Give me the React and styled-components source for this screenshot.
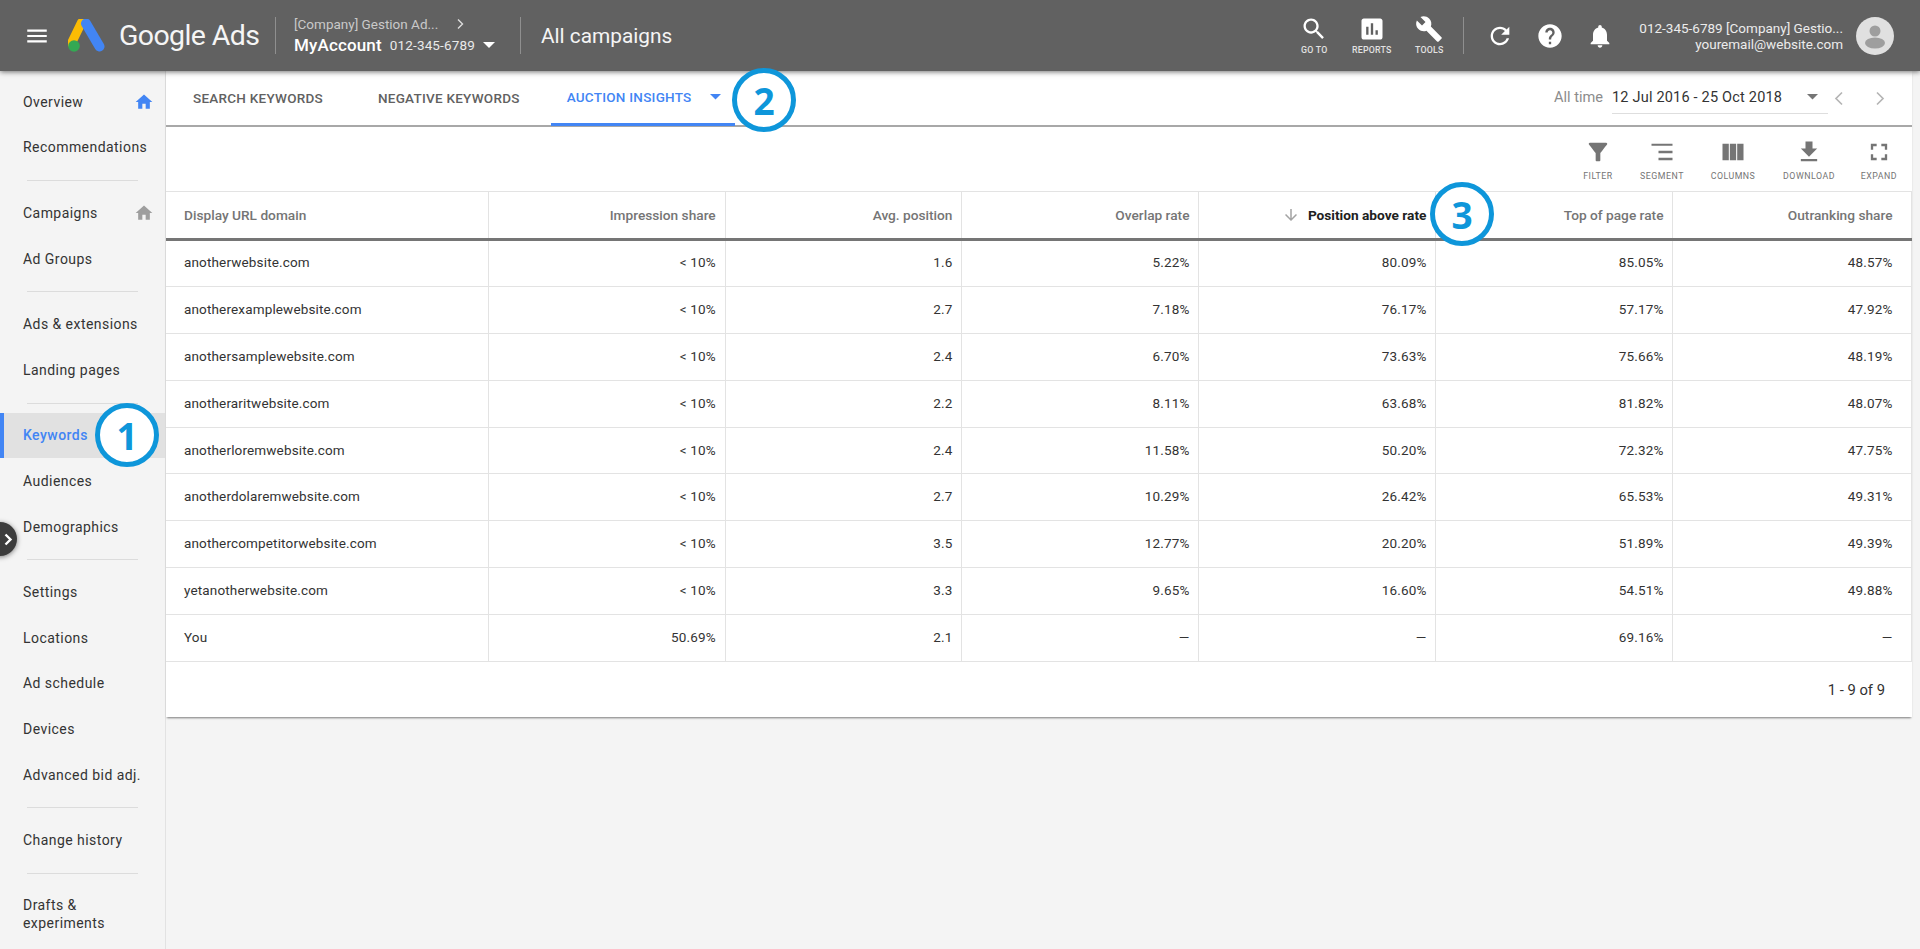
import React from "react";
import styled, { createGlobalStyle } from "styled-components";

const Global = createGlobalStyle`
  html, body { margin: 0; padding: 0; height: 949px; overflow: hidden; background: #f4f4f4; }
  body { font-family: Roboto, "Liberation Sans", sans-serif; color: #333; }
  * { box-sizing: border-box; }
`;

const Page = styled.div`
  position: relative;
  width: 1920px;
  height: 949px;
  display: flex;
  flex-direction: column;
  overflow: hidden;
`;

const Header = styled.header`
  position: relative;
  z-index: 3;
  height: 71px;
  flex: none;
  background: #616161;
  box-shadow: 0 1px 5px rgba(0,0,0,.55);
  display: flex;
  align-items: center;
  color: #fff;
  padding-left: 24px;
`;
const Burger = styled.svg`
  width: 26px; height: 26px; fill: #fff; flex: none; margin-right: 18px;
`;
const LogoMark = styled.svg`
  width: 37px; height: 33px; flex: none; margin-right: 14px;
`;
const LogoText = styled.div`
  font-size: 28.5px; font-weight: 400; letter-spacing: -.6px; width: 156px; flex: none; color: #f5f5f5;
`;
const VSep = styled.div`
  width: 1px; height: 37px; background: #8f8f8f; flex: none;
  margin: ${p => p.$m || "0"};
`;
const Account = styled.div`
  margin-left: 18px; width: 226px; flex: none;
  display: flex; flex-direction: column; gap: 3px;
`;
const Crumb = styled.div`
  display: flex; align-items: center; font-size: 13.5px; line-height: 16px; color: #c9c9c9;
  span { width: 161px; white-space: nowrap; }
  svg { width: 10px; height: 12px; stroke: #ddd; fill: none; stroke-width: 1.4; }
`;
const AccountLine = styled.div`
  display: flex; align-items: center; line-height: 20px;
  b { font-size: 17px; font-weight: 500; letter-spacing: .15px; margin-right: 8px; }
  span { font-size: 13.5px; color: #eaeaea; letter-spacing: .15px; margin-right: 8px; }
`;
const Caret = styled.svg`
  width: ${p => p.$w || 12}px; height: ${p => (p.$w || 12) / 2}px; fill: ${p => p.$c || "#fff"}; flex: none;
`;
const PageTitle = styled.div`
  margin-left: 20px; font-size: 20.8px; font-weight: 400; color: #f5f5f5; flex: 1;
`;
const HeadTools = styled.div`
  display: flex; align-items: center; height: 100%;
`;
const HeadTool = styled.div`
  width: 57.5px; display: flex; flex-direction: column; align-items: center; gap: 1px;
  svg { width: 28px; height: 28px; fill: #fff; }
  span { font-size: 8.8px; font-weight: 500; letter-spacing: .2px; color: #e2e2e2; line-height: 12px; }
`;
const HeadIcon = styled.svg`
  width: 28px; height: 28px; fill: #fff; flex: none; margin-left: ${p => p.$ml}px;
`;
const User = styled.div`
  margin-left: 15px; text-align: right; font-size: 13.5px; line-height: 16px; color: #ececec; width: 214px;
  white-space: nowrap;
`;
const Avatar = styled.svg`
  width: 38px; height: 38px; flex: none; margin: 0 26px 0 13px;
`;

const Body = styled.div`
  flex: 1; display: flex; min-height: 0;
`;
const Side = styled.nav`
  width: 166px; flex: none; background: #f4f4f4; border-right: 1px solid #e2e2e2; padding-top: 8px;
`;
const NavItem = styled.div`
  position: relative;
  min-height: 45.6px;
  display: flex; align-items: center; justify-content: space-between;
  padding: 13px 11px 13px 23px;
  font-size: 14px; letter-spacing: .45px; line-height: 18px;
  color: ${p => p.$active ? "#4285f4" : "#333"};
  font-weight: ${p => p.$active ? 500 : 400};
  background: ${p => p.$active ? "#e1e1e1" : "transparent"};
  border-left: ${p => p.$active ? "4px solid #4285f4" : "0"};
  padding-left: ${p => p.$active ? 19 : 23}px;
  svg { width: 20px; height: 20px; margin: -1px 0; fill: ${p => p.$pin}; flex: none; }
`;
const NavDiv = styled.div`
  height: 1px; background: #dcdcdc; margin: 10px 27px 9px 27px;
`;
const Expander = styled.div`
  position: absolute; left: -17px; top: 522px; width: 34px; height: 34px; border-radius: 50%;
  background: #3c3c3c; box-shadow: 0 1px 5px rgba(0,0,0,.5);
  display: flex; align-items: center; justify-content: flex-end; padding-right: 4px; z-index: 2;
  svg { width: 10px; height: 13px; stroke: #fff; stroke-width: 2.4; fill: none; }
`;

const Main = styled.main`
  width: 1746px; flex: none;
`;
const Card = styled.section`
  background: #fff;
  box-shadow: 0 2px 2px -1px rgba(0,0,0,.5);
`;
const TabBar = styled.div`
  height: 56px; display: flex; background: #fff;
  border-bottom: 2px solid #a8a8a8;
  padding-left: 27px; align-items: stretch;
`;
const Tab = styled.div`
  position: relative;
  display: flex; align-items: center;
  font-size: 13.5px; font-weight: 500; letter-spacing: .25px;
  height: 55px;
  padding-bottom: 2px;
  color: ${p => p.$active ? "#4285f4" : "#616161"};
  margin-right: ${p => p.$mr}px;
  ${p => p.$active && `
    padding-left: 16px; padding-right: 13px; margin-left: -16px; padding-bottom: 0; border-bottom: 3px solid #4285f4; gap: 18px; width: 184px;
  `}
`;
const DateBox = styled.div`
  margin-left: auto; display: flex; align-items: center; height: 100%;
`;
const DateLabel = styled.span`
  font-size: 14.6px; color: #8c8c8c; margin-right: 9px; padding-bottom: 2px;
`;
const DateField = styled.div`
  width: 216px; height: 100%; display: flex; align-items: center; justify-content: space-between;
  font-size: 14.5px; color: #333; letter-spacing: .2px; padding: 0 10px 2px 0; position: relative;
  &::after { content: ""; position: absolute; left: 0; right: 0; bottom: 11px; height: 1px; background: #dedede; }
`;
const Chevrons = styled.div`
  display: flex; gap: 31px; margin: 0 27px 0 6px;
  svg { width: 10px; height: 15px; fill: none; stroke: #b5b5b5; stroke-width: 1.7; }
`;
const Toolbar = styled.div`
  height: 64px; display: flex; justify-content: flex-end; padding: 11px 0 0 0; align-items: flex-start;
`;
const ToolBtn = styled.div`
  width: ${p => p.$w}px; display: flex; flex-direction: column; align-items: center; gap: 4px;
  svg { width: 28px; height: 28px; fill: #757575; }
  span { font-size: 8.8px; font-weight: 400; letter-spacing: .5px; color: #757575; line-height: 12px; }
`;
const Table = styled.table`
  width: 1746px; border-collapse: collapse; table-layout: fixed; font-size: 13.5px;
  border-top: 1px solid #e3e3e3;
`;
const pad = p => (p.$first ? "0 0 0 18px" : p.$last ? "0 19px 0 9px" : "0 9px");
const Th = styled.th`
  height: 48px; padding: ${pad};
  text-align: ${p => p.$first ? "left" : "right"};
  font-weight: ${p => p.$sorted ? 700 : 500}; font-size: 13.7px;
  color: ${p => p.$sorted ? "#212121" : "#757575"};
  border-right: 1px solid #e3e3e3;
  border-bottom: 3px solid #757575;
  svg { width: 18px; height: 18px; fill: #a3a3a3; vertical-align: -4px; margin-right: 8px; }
`;
const Td = styled.td`
  height: 46.9px; padding: ${pad};
  text-align: ${p => p.$first ? "left" : "right"};
  color: #333; letter-spacing: .15px;
  border-right: 1px solid #e3e3e3;
  border-bottom: 1px solid #e3e3e3;
  span { position: relative; top: -1px; }
`;
const Footer = styled.div`
  height: 55px; display: flex; align-items: center; justify-content: flex-end;
  padding: 0 27px 0 0; font-size: 14.8px; color: #333;
`;
const Badge = styled.div`
  position: absolute; z-index: 4;
  left: ${p => p.$x - 32}px; top: ${p => p.$y - 32}px;
  width: 64px; height: 64px; border-radius: 50%;
  background: #fff; border: 5px solid #0e96da;
  display: flex; align-items: center; justify-content: center;
  font-family: "Open Sans", sans-serif; font-weight: 700; font-size: 37px; color: #0e96da;
`;

const P = {
  menu: "M3 18h18v-2H3v2zm0-5h18v-2H3v2zm0-7v2h18V6H3z",
  search: "M15.5 14h-.79l-.28-.27C15.41 12.59 16 11.11 16 9.5 16 5.91 13.09 3 9.5 3S3 5.91 3 9.5 5.91 16 9.5 16c1.61 0 3.09-.59 4.23-1.57l.27.28v.79l5 4.99L20.49 19l-4.99-5zm-6 0C7.01 14 5 11.99 5 9.5S7.01 5 9.5 5 14 7.01 14 9.5 11.99 14 9.5 14z",
  reports: "M19 3H5c-1.1 0-2 .9-2 2v14c0 1.1.9 2 2 2h14c1.1 0 2-.9 2-2V5c0-1.1-.9-2-2-2zM9 17H7v-7h2v7zm4 0h-2V7h2v10zm4 0h-2v-4h2v4z",
  tools: "M22.7 19l-9.1-9.1c.9-2.3.4-5-1.5-6.9-2-2-5-2.4-7.4-1.3L9 6 6 9 1.6 4.7C.4 7.1.9 10.1 2.9 12.1c1.9 1.9 4.6 2.4 6.9 1.5l9.1 9.1c.4.4 1 .4 1.4 0l2.3-2.3c.5-.4.5-1.1.1-1.4z",
  refresh: "M17.65 6.35C16.2 4.9 14.21 4 12 4c-4.42 0-7.99 3.58-7.99 8s3.57 8 7.99 8c3.73 0 6.84-2.55 7.73-6h-2.08c-.82 2.33-3.04 4-5.65 4-3.31 0-6-2.69-6-6s2.69-6 6-6c1.66 0 3.14.69 4.22 1.78L13 11h7V4l-2.35 2.35z",
  help: "M12 2C6.48 2 2 6.48 2 12s4.48 10 10 10 10-4.48 10-10S17.52 2 12 2zm1 17h-2v-2h2v2zm2.07-7.75l-.9.92C13.45 12.9 13 13.5 13 15h-2v-.5c0-1.1.45-2.1 1.17-2.83l1.24-1.26c.37-.36.59-.86.59-1.41 0-1.1-.9-2-2-2s-2 .9-2 2H8c0-2.21 1.79-4 4-4s4 1.79 4 4c0 .88-.36 1.68-.93 2.25z",
  bell: "M12 22c1.1 0 2-.9 2-2h-4c0 1.1.89 2 2 2zm6-6v-5c0-3.07-1.64-5.64-4.5-6.32V4c0-.83-.67-1.5-1.5-1.5s-1.5.67-1.5 1.5v.68C7.63 5.36 6 7.92 6 11v5l-2 2v1h16v-1l-2-2z",
  home: "M10 20v-6h4v6h5v-8h3L12 3 2 12h3v8z",
  filter: "M4.25 5.61C6.27 8.2 10 13 10 13v6c0 .55.45 1 1 1h2c.55 0 1-.45 1-1v-6s3.72-4.8 5.74-7.39c.51-.66.04-1.61-.79-1.61H5.04c-.83 0-1.3.95-.79 1.61z",
  segment: "M3 5h18v1.6H3zM9 11h12v2H9zM9 17h12v2H9z",
  columns: "M3 5h5.4v14H3zM9.3 5h5.4v14H9.3zM15.6 5H21v14h-5.4z",
  download: "M19 9h-4V3H9v6H5l7 7 7-7zM5 18v2h14v-2H5z",
  expand: "M7 14H5v5h5v-2H7v-3zm-2-4h2V7h3V5H5v5zm12 7h-3v2h5v-5h-2v3zM14 5v2h3v3h2V5h-5z",
  down: "M20 12l-1.41-1.41L13 16.17V4h-2v12.17l-5.58-5.59L4 12l8 8 8-8z",
};
const Ico = ({ d, ...r }) => <svg viewBox="0 0 24 24" {...r}><path d={d} /></svg>;

const nav = [
  [{ t: "Overview", pin: "#4285f4" }, { t: "Recommendations" }],
  [{ t: "Campaigns", pin: "#9e9e9e" }, { t: "Ad Groups" }],
  [{ t: "Ads & extensions" }, { t: "Landing pages" }],
  [{ t: "Keywords", active: true }, { t: "Audiences" }, { t: "Demographics" }],
  [{ t: "Settings" }, { t: "Locations" }, { t: "Ad schedule" }, { t: "Devices" }, { t: "Advanced bid adj." }],
  [{ t: "Change history" }],
  [{ t: "Drafts & experiments" }],
];

const cols = [
  ["Display URL domain", 322.5], ["Impression share", 236.7], ["Avg. position", 236.8], ["Overlap rate", 237],
  ["Position above rate", 237], ["Top of page rate", 237], ["Outranking share", 239],
];
const rows = [
  ["anotherwebsite.com", "< 10%", "1.6", "5.22%", "80.09%", "85.05%", "48.57%"],
  ["anotherexamplewebsite.com", "< 10%", "2.7", "7.18%", "76.17%", "57.17%", "47.92%"],
  ["anothersamplewebsite.com", "< 10%", "2.4", "6.70%", "73.63%", "75.66%", "48.19%"],
  ["anotheraritwebsite.com", "< 10%", "2.2", "8.11%", "63.68%", "81.82%", "48.07%"],
  ["anotherloremwebsite.com", "< 10%", "2.4", "11.58%", "50.20%", "72.32%", "47.75%"],
  ["anotherdolaremwebsite.com", "< 10%", "2.7", "10.29%", "26.42%", "65.53%", "49.31%"],
  ["anothercompetitorwebsite.com", "< 10%", "3.5", "12.77%", "20.20%", "51.89%", "49.39%"],
  ["yetanotherwebsite.com", "< 10%", "3.3", "9.65%", "16.60%", "54.51%", "49.88%"],
  ["You", "50.69%", "2.1", "—", "—", "69.16%", "—"],
];
const tools = [
  ["FILTER", P.filter, 64], ["SEGMENT", P.segment, 64], ["COLUMNS", P.columns, 78], ["DOWNLOAD", P.download, 74], ["EXPAND", P.expand, 66],
];

export default function App() {
  return (
    <Page>
      <Global />
      <Header>
        <Burger viewBox="0 0 24 24"><path d={P.menu} /></Burger>
        <LogoMark viewBox="0 0 37 33">
          <path d="M13.5 3.5 L3.5 24" stroke="#fbbc04" strokeWidth="9" strokeLinecap="round" fill="none" />
          <path d="M18 4.5 L31.5 27.5" stroke="#4285f4" strokeWidth="10" strokeLinecap="round" fill="none" />
          <circle cx="6" cy="27" r="5.8" fill="#34a853" />
        </LogoMark>
        <LogoText>Google Ads</LogoText>
        <VSep />
        <Account>
          <Crumb>
            <span>[Company] Gestion Ad...</span>
            <svg viewBox="0 0 10 12"><path d="M3 1.5 L7.5 6 L3 10.5" /></svg>
          </Crumb>
          <AccountLine>
            <b>MyAccount</b><span>012-345-6789</span>
            <Caret viewBox="0 0 10 5"><path d="M0 0h10L5 5z" /></Caret>
          </AccountLine>
        </Account>
        <VSep />
        <PageTitle>All campaigns</PageTitle>
        <HeadTools>
          <HeadTool><Ico d={P.search} /><span>GO TO</span></HeadTool>
          <HeadTool><Ico d={P.reports} /><span>REPORTS</span></HeadTool>
          <HeadTool><Ico d={P.tools} /><span>TOOLS</span></HeadTool>
          <VSep $m="0 0 0 5px" />
          <HeadIcon viewBox="0 0 24 24" $ml={22}><path d={P.refresh} /></HeadIcon>
          <HeadIcon viewBox="0 0 24 24" $ml={22}><path d={P.help} /></HeadIcon>
          <HeadIcon viewBox="0 0 24 24" $ml={22}><path d={P.bell} /></HeadIcon>
          <User>
            <div>012-345-6789 [Company] Gestio...</div>
            <div>youremail@website.com</div>
          </User>
          <Avatar viewBox="0 0 38 38">
            <circle cx="19" cy="19" r="19" fill="#e0e0e0" />
            <circle cx="19" cy="14" r="5.5" fill="#9e9e9e" />
            <ellipse cx="19" cy="26" rx="10" ry="5.5" fill="#9e9e9e" />
          </Avatar>
        </HeadTools>
      </Header>
      <Body>
        <Side>
          {nav.map((g, i) => (
            <React.Fragment key={i}>
              {i > 0 && <NavDiv />}
              {g.map(n => (
                <NavItem key={n.t} $active={n.active} $pin={n.pin}>
                  <span>{n.t}</span>
                  {n.pin && <Ico d={P.home} />}
                </NavItem>
              ))}
            </React.Fragment>
          ))}
        </Side>
        <Main>
          <Card>
            <TabBar>
              <Tab $mr={55}>SEARCH KEYWORDS</Tab>
              <Tab $mr={47}>NEGATIVE KEYWORDS</Tab>
              <Tab $active>
                AUCTION INSIGHTS
                <Caret viewBox="0 0 10 5" $w={11} $c="#4285f4"><path d="M0 0h10L5 5z" /></Caret>
              </Tab>
              <DateBox>
                <DateLabel>All time</DateLabel>
                <DateField>
                  12 Jul 2016 - 25 Oct 2018
                  <Caret viewBox="0 0 10 5" $w={11} $c="#757575"><path d="M0 0h10L5 5z" /></Caret>
                </DateField>
                <Chevrons>
                  <svg viewBox="0 0 10 15"><path d="M8 1.5 L2 7.5 L8 13.5" /></svg>
                  <svg viewBox="0 0 10 15"><path d="M2 1.5 L8 7.5 L2 13.5" /></svg>
                </Chevrons>
              </DateBox>
            </TabBar>
            <Toolbar>
              {tools.map(([l, d, w]) => (
                <ToolBtn key={l} $w={w}><Ico d={d} /><span>{l}</span></ToolBtn>
              ))}
            </Toolbar>
            <Table>
              <colgroup>{cols.map(([c, w]) => <col key={c} width={w} />)}</colgroup>
              <thead>
                <tr>
                  {cols.map(([c], i) => (
                    <Th key={c} $first={i === 0} $last={i === 6} $sorted={i === 4}>
                      {i === 4 && <Ico d={P.down} />}{c}
                    </Th>
                  ))}
                </tr>
              </thead>
              <tbody>
                {rows.map(r => (
                  <tr key={r[0]}>
                    {r.map((v, i) => <Td key={i} $first={i === 0} $last={i === 6}><span>{v}</span></Td>)}
                  </tr>
                ))}
              </tbody>
            </Table>
            <Footer>1 - 9 of 9</Footer>
          </Card>
        </Main>
      </Body>
      <Expander><svg viewBox="0 0 10 13"><path d="M2.5 1.5 L7.5 6.5 L2.5 11.5" /></svg></Expander>
      <Badge $x={127} $y={435}>1</Badge>
      <Badge $x={764} $y={100}>2</Badge>
      <Badge $x={1462} $y={214}>3</Badge>
    </Page>
  );
}
